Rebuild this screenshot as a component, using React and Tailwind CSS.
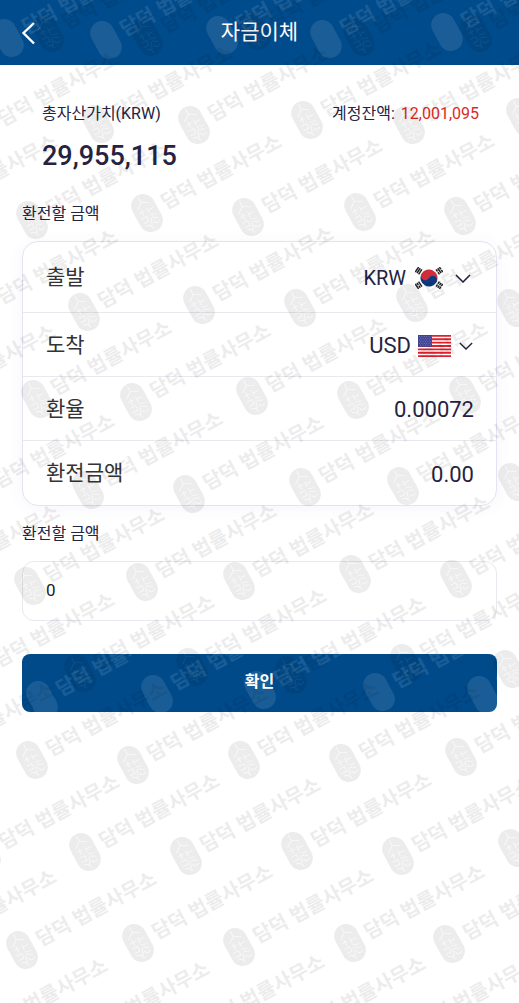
import { useState } from 'react';

const PAGE_MARKS = [
  [48, 33], [147, 37], [254, 31], [359, 37], [476, 33],
  [-16, 130], [98, 124], [194, 125], [307, 120], [409, 125], [522, 117],
  [-77, 213], [32, 220], [147, 213], [248, 217], [360, 212], [460, 216],
  [-17, 308], [84, 312], [199, 305], [300, 308], [412, 303], [513, 308],
  [-79, 403], [37, 399], [136, 402], [252, 396], [353, 400], [465, 395],
  [-20, 492], [88, 490], [189, 494], [305, 487], [403, 486], [514, 482],
  [-75, 583], [30, 586], [142, 582], [239, 581], [355, 574], [456, 579],
  [-20, 671], [80, 673], [192, 667], [291, 675], [406, 663], [509, 669],
  [-80, 761], [32, 760], [133, 765], [244, 760], [345, 763], [461, 757],
  [-15, 853], [85, 852], [186, 856], [297, 851], [398, 856], [514, 848],
  [-78, 948], [22, 950], [138, 943], [239, 947], [350, 943], [449, 944],
  [-27, 1037], [75, 1040], [190, 1033], [291, 1035], [403, 1035],
];

const HEADER_MARKS = [[8, 38], [106, 40], [222, 35], [326, 39], [447, 32]];

// relative to the button
const BUTTON_MARKS = [[-91, 44], [20, 46], [135, 40], [238, 36], [357, 38], [461, 41]];

const Watermark = ({ marks, className }) => (
  <svg aria-hidden="true" className={`pointer-events-none absolute inset-0 h-full w-full ${className}`}>
    {marks.map(([x, y]) => (
      <g key={`${x}-${y}`} transform={`translate(${x} ${y}) rotate(-28.5)`}>
        <path
          fill="currentColor"
          d="M-12 -8a12 12 0 0 1 24 0v16a12 12 0 0 1-24 0z"
        />
        <g fill="none" stroke="white" strokeOpacity="0.7" strokeWidth="0.9">
          <path d="M0 -18v6l-7 5M0 -12l7 4M-7 -3h6M-4 -6v7M2 -5v6M2 -2h6M-8 3h6v5h-6M1 3l7 2M2 6l6 3M-7 11l6 2 2-7M2 10c0 4 3 4 6 2M-3 13l2 4" />
        </g>
        <text x="18" y="6" fill="currentColor" className="text-[20px] font-bold">
          담덕 법률사무소
        </text>
      </g>
    ))}
  </svg>
);

const KoreaFlag = () => (
  <svg viewBox="0 0 28 22" className="h-[22px] w-7" aria-hidden="true">
    <g transform="rotate(28 14 11)">
      <path fill="#cd2e3a" d="M5.5 11a8.5 8.5 0 0 1 17 0z" />
      <path fill="#0b3a82" d="M5.5 11a8.5 8.5 0 0 0 17 0z" />
      <circle cx="9.75" cy="11" r="4.25" fill="#cd2e3a" />
      <circle cx="18.25" cy="11" r="4.25" fill="#0b3a82" />
    </g>
    <g stroke="#222" strokeWidth="1.5" fill="none">
      <path transform="translate(3.6 3.7) rotate(-56)" d="M-3 -2h6M-3 0h6M-3 2h6" />
      <path transform="translate(24.4 18.3) rotate(-56)" d="M-3 -2h2.6M.4 -2h2.6M-3 0h2.6M.4 0h2.6M-3 2h2.6M.4 2h2.6" />
      <path transform="translate(24.4 3.7) rotate(56)" d="M-3 -2h2.6M.4 -2h2.6M-3 0h6M-3 2h2.6M.4 2h2.6" />
      <path transform="translate(3.6 18.3) rotate(56)" d="M-3 -2h6M-3 0h2.6M.4 0h2.6M-3 2h6" />
    </g>
  </svg>
);

const UsaFlag = () => (
  <svg viewBox="0 0 33 22" className="h-[22px] w-[33px]" aria-hidden="true">
    <path fill="#fff" d="M0 0h33v22H0z" />
    <path
      stroke="#e0202c"
      strokeWidth="1.8"
      d="M0 .85h33M0 4.23h33M0 7.61h33M0 11h33M0 14.38h33M0 17.76h33M0 21.15h33"
    />
    <path fill="#3f4193" d="M0 0h14v11.8H0z" />
    <path
      stroke="#8f92c8"
      strokeWidth="0.8"
      strokeDasharray="0.9 1.5"
      d="M1 1.6h12.5M2.2 3.3h11M1 5h12.5M2.2 6.7h11M1 8.4h12.5M2.2 10.1h11"
    />
  </svg>
);

const Chevron = ({ className }) => (
  <svg viewBox="0 0 16 9" className={className} fill="none" stroke="currentColor" strokeWidth="1.6" aria-hidden="true">
    <path d="M1 1l7 7 7-7" />
  </svg>
);

const App = () => {
  const [from, setFrom] = useState('KRW');
  const [to, setTo] = useState('USD');
  const [amount, setAmount] = useState('0');

  return (
    <div className="relative min-h-screen overflow-hidden bg-white font-[Roboto,'Noto_Sans_CJK_KR',sans-serif] text-[#25233f]">
      <header className="relative flex h-[65px] items-center justify-center overflow-hidden bg-[#004b8b] text-white">
        <Watermark marks={HEADER_MARKS} className="text-white opacity-10" />
        <button type="button" aria-label="뒤로" className="absolute left-4 p-1">
          <svg viewBox="0 0 16 24" className="h-6 w-4" fill="none" stroke="currentColor" strokeWidth="2.4">
            <path d="M14 2L3.500 12L14 22.500" />
          </svg>
        </button>
        <h1 className="text-[21px]">자금이체</h1>
      </header>

      <main className="px-[22px] pt-[37px]">
        <section className="px-5">
          <div className="flex justify-between text-base leading-6">
            <p>총자산가치(KRW)</p>
            <p className="-mr-0.5">
              계정잔액: <span className="ml-0.5 text-[#dc2a1e]">12,001,095</span>
            </p>
          </div>
          <p className="mt-[14px] text-[27px] leading-8 font-medium">29,955,115</p>
        </section>

        <h2 className="mt-[30px] text-base leading-6">환전할 금액</h2>

        <div className="mt-[15px] divide-y divide-[#e8e8ee] rounded-2xl border border-[#e4e2f3] text-[22px] shadow-[0_2px_16px_rgba(90,80,200,0.06)]">
          <div className="flex h-[71px] items-center justify-between pt-0.5 pr-[25px] pl-[23px]">
            <label htmlFor="from" className="text-[21px] text-[#333]">출발</label>
            <div className="flex items-center">
              <select
                id="from"
                value={from}
                onChange={(e) => setFrom(e.target.value)}
                className="field-sizing-content appearance-none text-[20px]"
              >
                <option>KRW</option>
                <option>USD</option>
              </select>
              <span className="mr-3 ml-[9px]">{from === 'KRW' ? <KoreaFlag /> : <UsaFlag />}</span>
              <Chevron className="h-[9px] w-4" />
            </div>
          </div>

          <div className="flex h-16 items-center justify-between pt-0.5 pr-[23px] pl-[23px]">
            <label htmlFor="to" className="text-[21px] text-[#333]">도착</label>
            <div className="flex items-center">
              <select
                id="to"
                value={to}
                onChange={(e) => setTo(e.target.value)}
                className="field-sizing-content appearance-none text-[22px]"
              >
                <option>USD</option>
                <option>KRW</option>
              </select>
              <span className="mr-2 ml-[7px]">{to === 'USD' ? <UsaFlag /> : <KoreaFlag />}</span>
              <Chevron className="h-2 w-[14px]" />
            </div>
          </div>

          <div className="flex h-16 items-center justify-between pt-0.5 pr-[22px] pl-[23px]">
            <span className="text-[21px] text-[#333]">환율</span>
            <span>0.00072</span>
          </div>
          <div className="flex h-16 items-center justify-between pt-0.5 pr-[22px] pl-[23px]">
            <span className="text-[21px] text-[#333]">환전금액</span>
            <span>0.00</span>
          </div>
        </div>

        <label htmlFor="amount" className="mt-4 block text-base leading-6">환전할 금액</label>
        <input
          id="amount"
          inputMode="decimal"
          value={amount}
          onChange={(e) => setAmount(e.target.value)}
          className="mt-[15px] block h-[60px] w-full rounded-xl border border-[#e8e8ee] px-[23px] pb-0.5 text-[17px] text-[#222]"
        />

        <button
          type="button"
          className="relative mt-[33px] h-[58px] w-full overflow-hidden rounded-lg bg-[#004b8b] pb-0.5 text-base font-bold text-white"
        >
          <Watermark marks={BUTTON_MARKS} className="text-white opacity-10" />
          확인
        </button>
      </main>

      <Watermark marks={PAGE_MARKS} className="text-black opacity-[0.07]" />
    </div>
  );
};

export default App;
